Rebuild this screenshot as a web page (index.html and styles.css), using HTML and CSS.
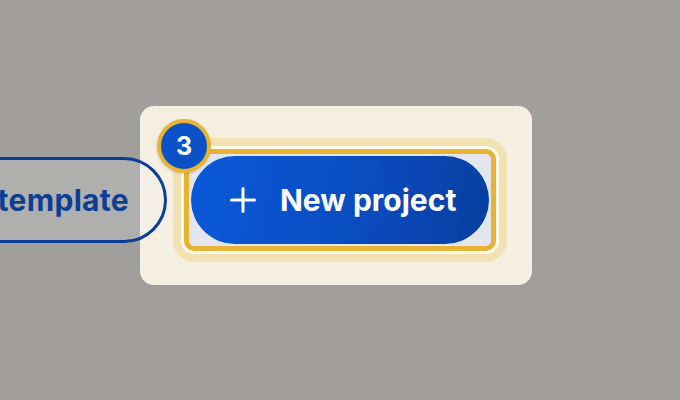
FILE: index.html
```html
<!DOCTYPE html>
<html lang="en">
<head>
    <meta charset="UTF-8">
    <title>Projects</title>
    <link rel="stylesheet" href="styles.css">
</head>
<body>

<div class="stage">
    <div class="row">
        <button class="pill-outline">Use template</button>

        <div class="card">
            <div class="focus-ring">
                <span class="step-badge">3</span>
                <button class="pill-primary">
                    <svg class="plus" viewBox="0 0 26 26" width="26" height="26">
                        <path d="M13 1.5V24.5M1.5 13H24.5" stroke="#fff" stroke-width="3" stroke-linecap="round" fill="none"/>
                    </svg>
                    <span>New project</span>
                </button>
            </div>
        </div>
    </div>
</div>

</body>
</html>
```

FILE: styles.css
```css
body {
    margin: 0;
    background: #a19f9c;
    font-family: 'Inter', 'Noto Sans', sans-serif;
    overflow: hidden;
}
.stage {
    height: 400px;
    padding-top: 106px;
    box-sizing: border-box;
}
.row {
    width: 532px;
    display: flex;
    justify-content: flex-end;
    align-items: center;
}
.pill-outline {
    position: relative;
    z-index: 1;
    flex-shrink: 0;
    height: 86px;
    margin-right: -27px;
    margin-top: 8px;
    padding: 0 35px 0 40px;
    border: 3px solid #0b3f94;
    border-radius: 43px;
    background: rgba(235, 240, 250, 0.2);
    color: #0b3f94;
    font-family: inherit;
    font-size: 30px;
    font-weight: 700;
    letter-spacing: 0.3px;
    white-space: nowrap;
}
.card {
    flex-shrink: 0;
    width: 392px;
    height: 179px;
    box-sizing: border-box;
    padding: 43px 36px 34px 44px;
    background: #f5efe2;
    border-radius: 14px;
}
.focus-ring {
    position: relative;
    display: inline-block;
    padding: 2px;
    border: 5px solid #e8b234;
    border-radius: 10px;
    background: #e4e6ed;
    box-shadow: 0 0 0 3px #fffaee, 0 0 0 11px #f1e1b3;
}
.step-badge {
    position: absolute;
    left: -32px;
    top: -35px;
    z-index: 2;
    width: 46px;
    height: 46px;
    border: 4px solid #e8b234;
    border-radius: 50%;
    background: #0b52c9;
    color: #fff;
    font-size: 25px;
    font-weight: 700;
    display: flex;
    align-items: center;
    justify-content: center;
    box-shadow: 0 1px 3px rgba(0,0,0,0.15);
}
.pill-primary {
    width: 298px;
    height: 88px;
    display: flex;
    align-items: center;
    gap: 24px;
    padding: 0 0 0 39px;
    border: none;
    border-radius: 44px;
    background: linear-gradient(100deg, #0b5ada 0%, #0a4cc0 55%, #083f9f 100%);
    color: #fff;
    font-family: inherit;
    font-size: 30px;
    font-weight: 700;
    white-space: nowrap;
    cursor: pointer;
}
.plus {
    flex-shrink: 0;
}
```
